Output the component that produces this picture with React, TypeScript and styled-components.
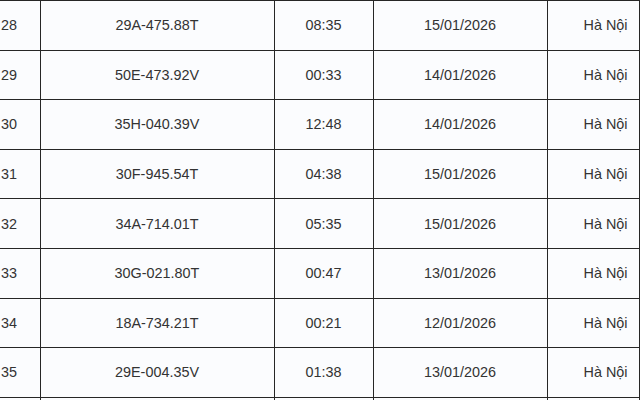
import React from "react";
import styled, { createGlobalStyle } from "styled-components";

const Global = createGlobalStyle`
  html, body { margin: 0; padding: 0; background: #fbfcfe; }
  body { overflow: hidden; height: 400px; }
`;

const Table = styled.table`
  border-collapse: collapse;
  table-layout: fixed;
  width: 639px;
  font-family: "Liberation Sans", Arial, sans-serif;
  font-size: 14.4px;
  color: #333;
  background: #fbfcfe;
`;

const Col = styled.col<{ $w: number }>`
  width: ${(p) => p.$w}px;
`;

const Row = styled.tr`
  height: 49.6px;
`;

const Cell = styled.td<{ $align?: "left" | "center" | "right"; $first?: boolean }>`
  border: 1.5px solid #262626;
  ${(p) => (p.$first ? "border-left: none;" : "")}
  padding: 0 ${(p) => (p.$align === "right" ? "11px" : "0")} 0 ${(p) => (p.$align === "left" ? "1px" : "0")};
  text-align: ${(p) => p.$align ?? "center"};
  vertical-align: middle;
  white-space: nowrap;
  overflow: hidden;
`;

const widths = [40, 234, 99, 174, 92];

const rows = [
  ["28", "29A-475.88T", "08:35", "15/01/2026", "Hà Nội"],
  ["29", "50E-473.92V", "00:33", "14/01/2026", "Hà Nội"],
  ["30", "35H-040.39V", "12:48", "14/01/2026", "Hà Nội"],
  ["31", "30F-945.54T", "04:38", "15/01/2026", "Hà Nội"],
  ["32", "34A-714.01T", "05:35", "15/01/2026", "Hà Nội"],
  ["33", "30G-021.80T", "00:47", "13/01/2026", "Hà Nội"],
  ["34", "18A-734.21T", "00:21", "12/01/2026", "Hà Nội"],
  ["35", "29E-004.35V", "01:38", "13/01/2026", "Hà Nội"],
  ["", "", "", "", ""],
];

export default function App() {
  return (
    <>
      <Global />
      <Table>
        <colgroup>
          {widths.map((w, i) => (
            <Col key={i} $w={w} />
          ))}
        </colgroup>
        <tbody>
          {rows.map((r, i) => (
            <Row key={i}>
              <Cell $first $align="left">{r[0]}</Cell>
              <Cell>{r[1]}</Cell>
              <Cell>{r[2]}</Cell>
              <Cell>{r[3]}</Cell>
              <Cell $align="right">{r[4]}</Cell>
            </Row>
          ))}
        </tbody>
      </Table>
    </>
  );
}
